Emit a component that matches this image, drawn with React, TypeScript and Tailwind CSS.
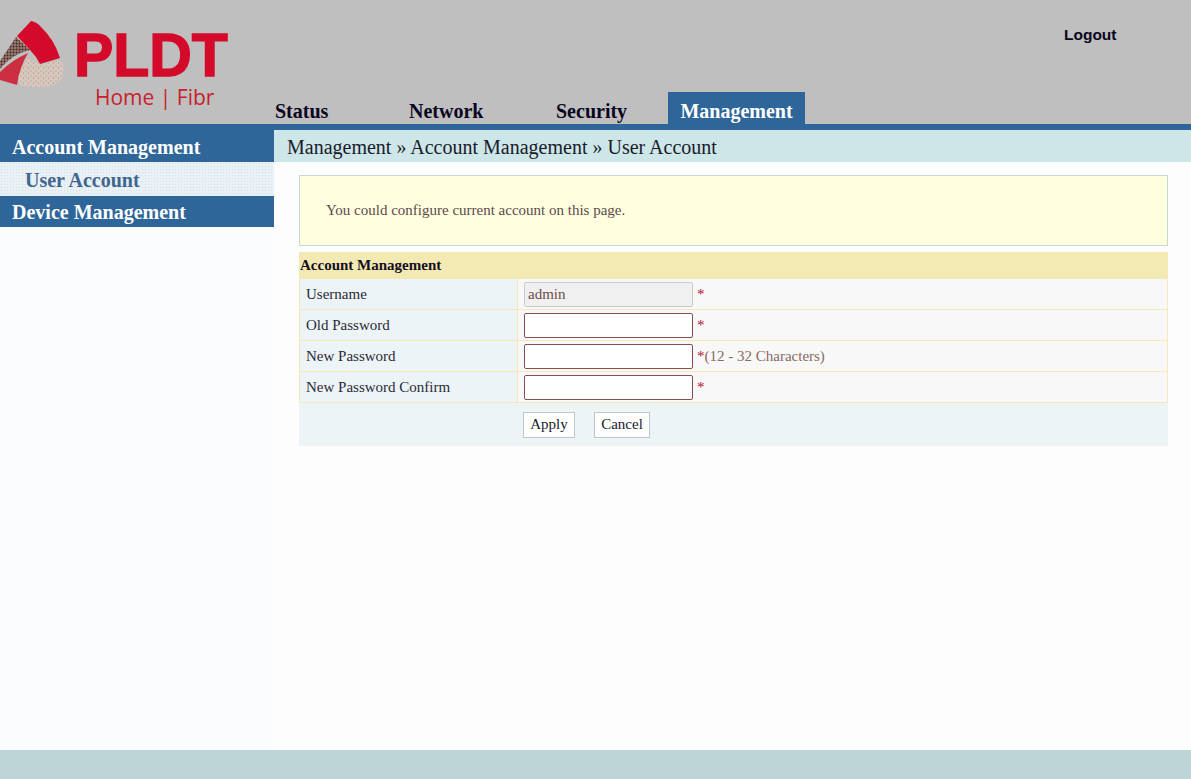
import React from 'react';

const serif = "font-['Liberation_Serif','Times_New_Roman',serif]";

const tabs = [
  { label: 'Status', width: 'w-[134px]' },
  { label: 'Network', width: 'w-[147px]' },
  { label: 'Security', width: 'w-[113px]' },
];

const rows = [
  { label: 'Username', value: 'admin', disabled: true },
  { label: 'Old Password' },
  { label: 'New Password', hint: '(12 - 32 Characters)' },
  { label: 'New Password Confirm' },
];

function Logo() {
  return (
    <div className="relative w-[274px] h-[124px] shrink-0">
      <svg width="70" height="92" viewBox="0 0 70 92" className="absolute left-0 top-0">
        <defs>
          <pattern id="brownDots" width="3" height="3" patternUnits="userSpaceOnUse">
            <rect width="3" height="3" fill="#9a7a70" />
            <circle cx="1.5" cy="1.5" r="1" fill="#3d2522" />
          </pattern>
          <pattern id="redDots" width="2" height="2" patternUnits="userSpaceOnUse">
            <rect width="2" height="2" fill="#d42a3c" />
            <circle cx="1" cy="1" r="0.5" fill="#a8444c" />
          </pattern>
          <pattern id="beigeDots" width="5" height="5" patternUnits="userSpaceOnUse">
            <rect width="5" height="5" fill="#d8c8bc" />
            <circle cx="1" cy="1" r="0.6" fill="#6f93b5" />
            <circle cx="3.5" cy="3" r="0.6" fill="#c96a5e" />
          </pattern>
        </defs>
        <path d="M31 21 Q37 22 41 27 Q54 39 60 58 L40 64 Q36 56 30 50 L17 36 Z" fill="#d40a2b" />
        <path d="M16 37 L30 50 Q12 54 0 69 L0 61 Z" fill="url(#brownDots)" />
        <path d="M28 53 Q20 66 17 85 L0 80 L0 72 Q12 60 28 53 Z" fill="url(#redDots)" />
        <path d="M28 58 L40 65 L62 60 Q64 70 62 78 Q55 86 47 87 Q32 88 20 85 Q19 80 18 78 Q22 66 28 58 Z" fill="url(#beigeDots)" />
      </svg>
      <span className="absolute left-[74px] top-[32px] font-['Liberation_Sans',Arial,sans-serif] font-bold text-[#d40a2b] text-[62px] leading-[46px] scale-x-[0.95] origin-left [-webkit-text-stroke:1.5px_#d40a2b]">PLDT</span>
      <span className="absolute left-[95px] top-[85px] font-['Open_Sans','Liberation_Sans',sans-serif] font-medium text-[#c8202f] text-[21px] leading-6">Home | Fibr</span>
    </div>
  );
}

export default function App() {
  return (
    <div className={`${serif} h-[779px] w-[1191px] overflow-hidden flex flex-col bg-[#fbfcfd]`}>
      <header className="h-[124px] bg-[#bfbfbf] flex shrink-0">
        <Logo />
        <nav className="flex items-end flex-1 relative">
          {tabs.map(tab => (
            <div key={tab.label} className={`${tab.width} h-[32px] pl-[1px] pt-[6px] flex items-center font-bold text-[20px] text-[#0a0520]`}>
              {tab.label}
            </div>
          ))}
          <div className="w-[137px] h-[32px] pt-[6px] bg-[#2f6699] text-white font-bold text-[20px] flex items-center justify-center">Management</div>
          <a className="absolute left-[790px] top-[25px] font-['Liberation_Sans',Arial,sans-serif] font-bold text-[15.5px] leading-5 text-[#0a0520]">Logout</a>
        </nav>
      </header>
      <div className="h-[6px] bg-[#2f6699] shrink-0" />
      <div className="flex flex-1 min-h-0">
        <aside className="w-[274px] shrink-0 flex flex-col">
          <div className="h-[32px] pt-[2px] bg-[#2f6699] text-white font-bold text-[20px] pl-3 flex items-center">Account Management</div>
          <div className="h-[34px] pt-[2px] bg-[#eaf1f5] bg-[radial-gradient(#d3e0e9_1px,transparent_1px)] bg-[length:3px_3px] text-[#3f6690] font-bold text-[20px] pl-[25px] flex items-center">User Account</div>
          <div className="h-[31px] bg-[#2f6699] text-white font-bold text-[20px] pl-3 flex items-center">Device Management</div>
        </aside>
        <main className="flex-1 bg-[#fdfdfd]">
          <div className="h-[32px] pt-[2px] bg-[#cde6e8] pl-[13px] flex items-center text-[20px] text-[#1a1a2a]">
            Management » Account Management » User Account
          </div>
          <div className="ml-[25px] mr-[23px] mt-[13px]">
            <div className="h-[71px] bg-[#ffffe0] border border-[#c5d8d8] pl-[26px] flex items-center text-[15px] text-[#5c4a4a]">
              You could configure current account on this page.
            </div>
            <div className="mt-[6px] h-[27px] bg-[#f3e9b3] pl-[1px] flex items-center font-bold text-[15px] text-[#14101f]">Account Management</div>
            {rows.map(row => (
              <div key={row.label} className="h-[31px] flex border-b border-[#f8e7bd] bg-[#f8f8f8]">
                <div className="w-[219px] bg-[#edf4f7] border-x border-[#f8e7bd] pl-[6px] flex items-center text-[15px] text-[#2a2a35]">{row.label}</div>
                <div className="flex-1 border-r border-[#f8e7bd] pl-[6px] flex items-center text-[15px]">
                  {row.disabled ? (
                    <input readOnly value={row.value} className={`${serif} w-[169px] h-[25px] bg-[#f0f0f0] border border-[#c4ccd0] rounded-[2px] px-[3px] text-[15px] text-[#6b4c4c]`} />
                  ) : (
                    <input type="password" className="w-[169px] h-[25px] bg-white border border-[#85504f] rounded-[2px]" />
                  )}
                  <span className="ml-1 text-[#b3102f]">*</span>
                  {row.hint && <span className="text-[#8a6a60]">{row.hint}</span>}
                </div>
              </div>
            ))}
            <div className="h-[43px] bg-[#edf4f6] pl-[224px] flex items-center gap-[19px]">
              <button className={`${serif} w-[52px] h-[26px] bg-white border border-[#bcc8cc] text-[15px] text-[#1a1a2a]`}>Apply</button>
              <button className={`${serif} w-[56px] h-[26px] bg-white border border-[#bcc8cc] text-[15px] text-[#1a1a2a]`}>Cancel</button>
            </div>
          </div>
        </main>
      </div>
      <footer className="h-[29px] bg-[#bcd5d7] shrink-0" />
    </div>
  );
}
